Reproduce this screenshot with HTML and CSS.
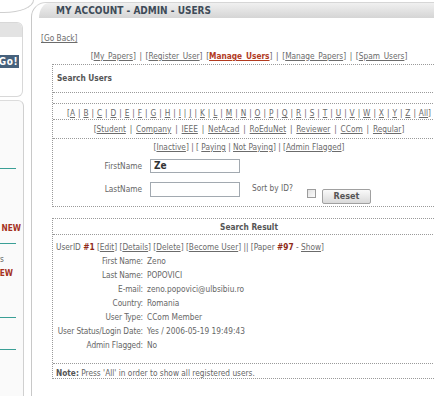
FILE: index.html
```html
<!DOCTYPE html>
<html>
<head>
<meta charset="utf-8">
<link rel="stylesheet" href="styles.css">
</head>
<body>
<div class="page">
  <aside class="side">
    <div class="arc"></div>
    <div class="sbox1">
      <div class="sbar"></div>
      <div class="gobtn"><span>Go!</span></div>
    </div>
    <div class="sbox2">
      <div class="tl t1"></div>
      <div class="new n1"><span>NEW</span></div>
      <div class="tl t2"></div>
      <div class="stxt"><span>Papers</span></div>
      <div class="new n2"><span>NEW</span></div>
      <div class="tl t3"></div>
      <div class="tl t4"></div>
    </div>
  </aside>
  <main class="main">
    <div class="head"><h1>MY ACCOUNT - ADMIN - USERS</h1></div>
    <div class="content">
      <div class="goback"><a href="#">[Go Back]</a></div>
      <div class="nav">[<a href="#">My Papers</a>] | [<a href="#">Register User</a>] [<a href="#" class="active">Manage Users</a>] | [<a href="#">Manage Papers</a>] | [<a href="#">Spam Users</a>]</div>

      <div class="box search">
        <div class="bhead">Search Users</div>
        <div class="brow spacer"></div>
        <div class="brow letters">[<a href="#">A</a> | <a href="#">B</a> | <a href="#">C</a> | <a href="#">D</a> | <a href="#">E</a> | <a href="#">F</a> | <a href="#">G</a> | <a href="#">H</a> | <a href="#">I</a> | <a href="#">J</a> | <a href="#">K</a> | <a href="#">L</a> | <a href="#">M</a> | <a href="#">N</a> | <a href="#">O</a> | <a href="#">P</a> | <a href="#">Q</a> | <a href="#">R</a> | <a href="#">S</a> | <a href="#">T</a> | <a href="#">U</a> | <a href="#">V</a> | <a href="#">W</a> | <a href="#">X</a> | <a href="#">Y</a> | <a href="#">Z</a> | <a href="#">All</a>]</div>
        <div class="brow cats">[<a href="#">Student</a> | <a href="#">Company</a> | <a href="#">IEEE</a> | <a href="#">NetAcad</a> | <a href="#">RoEduNet</a> | <a href="#">Reviewer</a> | <a href="#">CCom</a> | <a href="#">Regular</a>]</div>
        <div class="status">[<a href="#">Inactive</a>] | [ <a href="#">Paying</a> | <a href="#">Not Paying</a>] | [<a href="#">Admin Flagged</a>]</div>
        <div class="frow r1">
          <span class="flabel">FirstName</span>
          <span class="inp"><b>Ze</b></span>
        </div>
        <div class="frow r2">
          <span class="flabel">LastName</span>
          <span class="inp"></span>
          <span class="sortlbl">Sort by ID?</span>
          <span class="chk"></span>
          <span class="btn">Reset</span>
        </div>
      </div>

      <div class="box result">
        <div class="rhead">Search Result</div>
        <div class="rbody">
          <div class="uid">UserID <b class="red">#1</b> [<a href="#">Edit</a>] [<a href="#">Details</a>] [<a href="#">Delete</a>] [<a href="#">Become User</a>] || [Paper <b class="red">#97</b> - <a href="#">Show</a>]</div>
          <div class="fields">
            <span class="lbl">First Name:</span><span>Zeno</span>
            <span class="lbl">Last Name:</span><span>POPOVICI</span>
            <span class="lbl">E-mail:</span><span>zeno.popovici@ulbsibiu.ro</span>
            <span class="lbl">Country:</span><span>Romania</span>
            <span class="lbl">User Type:</span><span>CCom Member</span>
            <span class="lbl">User Status/Login Date:</span><span>Yes / 2006-05-19 19:49:43</span>
            <span class="lbl">Admin Flagged:</span><span>No</span>
          </div>
        </div>
        <div class="note"><b>Note:</b> Press 'All' in order to show all registered users.</div>
      </div>
    </div>
  </main>
</div>
</body>
</html>
```

FILE: styles.css
```css
html, body {
  margin: 0;
  padding: 0;
}
body {
  width: 434px;
  height: 396px;
  overflow: hidden;
  background: #fff;
  font-family: "DejaVu Sans Condensed", "DejaVu Sans", sans-serif;
  font-size: 8.25px;
  color: #666;
}
a {
  color: #6b6b6b;
  text-decoration: underline;
}
.page {
  display: flex;
  width: 457px;
}

/* sidebar */
.side {
  width: 31px;
  flex: none;
}
.arc {
  width: 34px;
  height: 13px;
  box-sizing: border-box;
  border-right: 1px solid #cfcfcf;
  border-bottom: 1px solid #cfcfcf;
  border-bottom-right-radius: 30px 13px;
}
.sbox1 {
  margin-top: 9px;
  width: 23px;
  height: 75px;
  box-sizing: border-box;
  border: 1px solid #d8d8d8;
  border-left: none;
  border-radius: 0 6px 6px 0;
}
.sbar {
  height: 14px;
  background: #e3e3e3;
  border-top-right-radius: 5px;
}
.gobtn {
  margin-top: 18px;
  width: 19px;
  height: 13px;
  background: #46617c;
  color: #fff;
  font-weight: bold;
  font-size: 10px;
  line-height: 13px;
  display: flex;
  justify-content: flex-end;
  overflow: hidden;
  white-space: nowrap;
}
.gobtn span {
  flex: none;
  padding-right: 1px;
  letter-spacing: 0.5px;
}
.sbox2 {
  margin-top: 3px;
  width: 24px;
  height: 300px;
  box-sizing: border-box;
  border-top: 1px solid #dcdcdc;
  border-right: 1px solid #d0d0d0;
  border-top-right-radius: 6px;
  background: #fafafa;
  overflow: hidden;
}
.tl {
  width: 16px;
  height: 1px;
  background: #3a9f96;
}
.t1 { margin-top: 67px; }
.t2 { margin-top: 10px; }
.t3 { margin-top: 39px; }
.t4 { margin-top: 31px; }
.new, .stxt {
  display: flex;
  justify-content: flex-end;
  overflow: hidden;
  white-space: nowrap;
  line-height: 10px;
}
.new span, .stxt span { flex: none; }
.new {
  color: #a5321f;
  font-weight: bold;
}
.n1 { margin-top: 54px; width: 21px; }
.n2 { margin-top: 4px; width: 13px; }
.stxt { margin-top: 10px; width: 4px; color: #666; }

/* main */
.main {
  flex: none;
  width: 426px;
  min-height: 400px;
  box-sizing: border-box;
  margin-top: 2px;
  border-left: 1px solid #c8c8c8;
  border-top: 1px solid #d6d6d6;
  border-top-left-radius: 15px;
  overflow: hidden;
}
.head {
  height: 15px;
  margin-left: 7px;
  padding-left: 17px;
  background: linear-gradient(#f0f0f0, #d5d5d5);
  border-top-left-radius: 10px 15px;
}
.head h1 {
  margin: 0;
  font-size: 10px;
  line-height: 15px;
  font-weight: bold;
  color: #3e4b58;
}
.content {
  padding-left: 9px;
  width: 416px;
}
.goback {
  margin-top: 15px;
  line-height: 10px;
}
.nav {
  margin-top: 8px;
  line-height: 10px;
  text-align: center;
  word-spacing: 1.3px;
  white-space: nowrap;
}
.nav .active {
  color: #b23a1e;
  font-weight: bold;
}

.box {
  margin: 0 11px;
  border: 1px dotted #9a9a9a;
}
.search { margin-top: 3px; }
.bhead {
  padding: 8px 4px 9px;
  line-height: 10px;
  font-weight: bold;
  color: #555;
  border-bottom: 1px dotted #9a9a9a;
}
.brow {
  border-bottom: 1px dotted #9a9a9a;
  text-align: center;
  line-height: 10px;
  white-space: nowrap;
}
.spacer { height: 10px; }
.letters { padding: 4px 0 1px; word-spacing: 0.6px; }
.cats { padding: 4px 0 4px; word-spacing: 1.5px; }
.status {
  padding-top: 3px;
  line-height: 10px;
  text-align: center;
}
.frow {
  display: flex;
  align-items: flex-start;
}
.r1 { margin-top: 7px; }
.r2 { margin-top: 9px; padding-bottom: 2px; }
.flabel {
  width: 89px;
  text-align: right;
  line-height: 14px;
  margin-right: 8px;
}
.inp {
  width: 90px;
  height: 14px;
  box-sizing: border-box;
  border: 1px solid #a2a9b0;
  background: #fff;
  padding-left: 3px;
  font-size: 10px;
  line-height: 12px;
  color: #333;
}
.r2 .inp { height: 15px; }
.sortlbl {
  margin-left: 12px;
  line-height: 12px;
}
.chk {
  margin-left: 14px;
  margin-top: 7px;
  width: 9px;
  height: 9px;
  box-sizing: border-box;
  border: 1px solid #9c9c9c;
  background: linear-gradient(135deg, #e2e2e2, #fbfbfb);
}
.btn {
  margin-left: 6px;
  margin-top: 7px;
  width: 49px;
  height: 15px;
  box-sizing: border-box;
  border: 1px solid #a0a0a0;
  border-radius: 2px;
  background: linear-gradient(#fafafa, #d9d9d9);
  text-align: center;
  font-weight: bold;
  font-size: 9px;
  line-height: 13px;
  color: #555;
}

.result { margin-top: 11px; }
.rhead {
  padding: 3px 0 2px;
  line-height: 10px;
  text-align: center;
  font-weight: bold;
  color: #555;
  border-bottom: 1px dotted #9a9a9a;
}
.rbody {
  padding: 5px 3px 11px;
  line-height: 14px;
}
.red { color: #8e2a17; }
.fields {
  display: grid;
  grid-template-columns: 87px 1fr;
  column-gap: 4px;
}
.lbl {
  white-space: nowrap;
  display: flex;
  justify-content: flex-end;
  letter-spacing: -0.12px;
}
.note {
  padding: 4px 3px 0;
  line-height: 10px;
  border-top: 1px dotted #9a9a9a;
}
.note b { color: #555; }
```
